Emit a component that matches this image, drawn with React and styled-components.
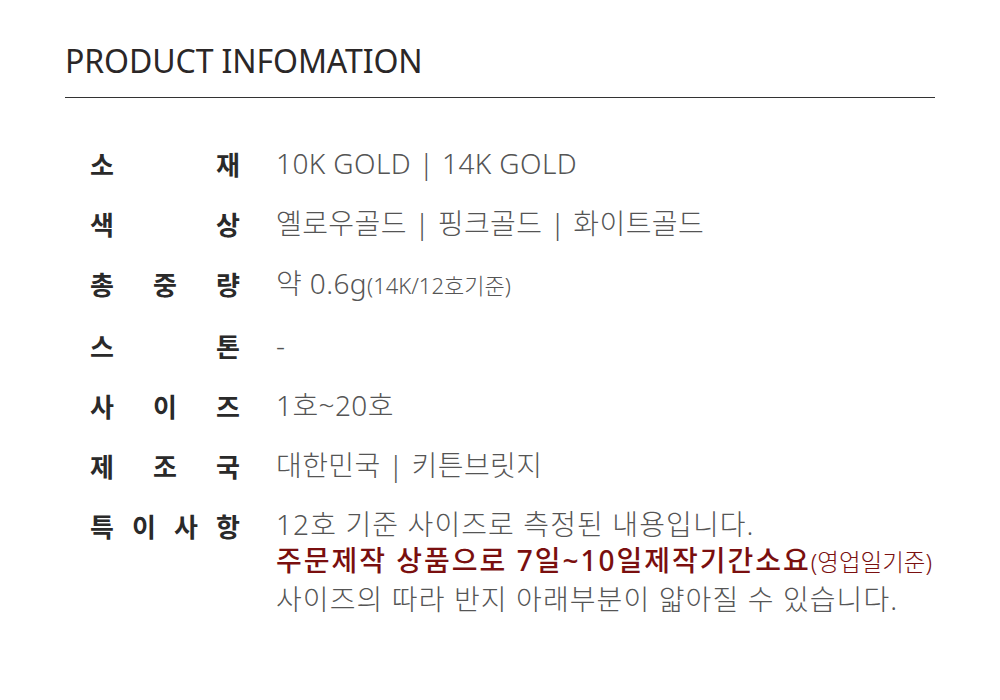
import React from "react";
import styled, { createGlobalStyle } from "styled-components";

const Global = createGlobalStyle`
  html, body { margin: 0; padding: 0; background: #fff; }
  body { font-family: "Noto Sans", "Noto Sans CJK KR", sans-serif; }
`;

const Page = styled.div`
  width: 1000px;
  height: 700px;
  box-sizing: border-box;
  padding: 38px 65px 0 65px;
`;

const Title = styled.h1`
  margin: 0;
  font-family: "Noto Sans", "Noto Sans CJK KR", sans-serif;
  font-weight: 400;
  font-size: 32px;
  line-height: 46px;
  letter-spacing: -0.1px;
  color: #2b2727;
`;

const Rule = styled.hr`
  margin: 13px 0 35px;
  border: 0;
  border-top: 1px solid #333;
`;

const Table = styled.div`
  display: flex;
  flex-direction: column;
  padding-left: 25px;
`;

const Row = styled.div`
  display: grid;
  grid-template-columns: 150px 1fr;
  column-gap: 36px;
  min-height: 60px;
`;

const Label = styled.div`
  display: flex;
  justify-content: space-between;
  height: 60px;
  align-items: center;
  font-family: "Noto Sans CJK KR", sans-serif;
  font-size: 26px;
  font-weight: 700;
  color: #2a2a2a;
`;

const Value = styled.div`
  font-family: "Noto Sans", "Noto Sans CJK KR", sans-serif;
  font-size: 28px;
  font-weight: 300;
  letter-spacing: ${(p) => (p.$multi ? "1.1px" : "0.4px")};
  color: #555;
  white-space: nowrap;
  line-height: ${(p) => (p.$multi ? "36.5px" : "60px")};
  padding-top: ${(p) => (p.$multi ? "10.5px" : "0")};
`;

const Small = styled.span`
  font-size: ${(p) => p.$size || 18}px;
  font-weight: 300;
  letter-spacing: 0;
  color: ${(p) => p.$color || "inherit"};
`;

const Red = styled.div`
  color: #7a0f0f;
  font-weight: 500;
  letter-spacing: 2px;
  white-space: nowrap;
`;

const rows = [
  { label: ["소", "재"], value: "10K GOLD | 14K GOLD" },
  { label: ["색", "상"], value: "옐로우골드 | 핑크골드 | 화이트골드" },
  {
    label: ["총", "중", "량"],
    value: (
      <>
        약 0.6g<Small $size={22}>(14K/12호기준)</Small>
      </>
    ),
  },
  { label: ["스", "톤"], value: "-" },
  { label: ["사", "이", "즈"], value: "1호~20호" },
  { label: ["제", "조", "국"], value: "대한민국 | 키튼브릿지" },
];

export default function App() {
  return (
    <Page>
      <Global />
      <Title>PRODUCT INFOMATION</Title>
      <Rule />
      <Table>
        {rows.map((r, i) => (
          <Row key={i}>
            <Label>
              {r.label.map((c, j) => (
                <span key={j}>{c}</span>
              ))}
            </Label>
            <Value>{r.value}</Value>
          </Row>
        ))}
        <Row>
          <Label>
            <span>특</span>
            <span>이</span>
            <span>사</span>
            <span>항</span>
          </Label>
          <Value $multi>
            <div>12호 기준 사이즈로 측정된 내용입니다.</div>
            <Red>
              주문제작 상품으로 7일~10일제작기간소요
              <Small $size={23.5} $color="#7a0f0f">(영업일기준)</Small>
            </Red>
            <div>사이즈의 따라 반지 아래부분이 얇아질 수 있습니다.</div>
          </Value>
        </Row>
      </Table>
    </Page>
  );
}
